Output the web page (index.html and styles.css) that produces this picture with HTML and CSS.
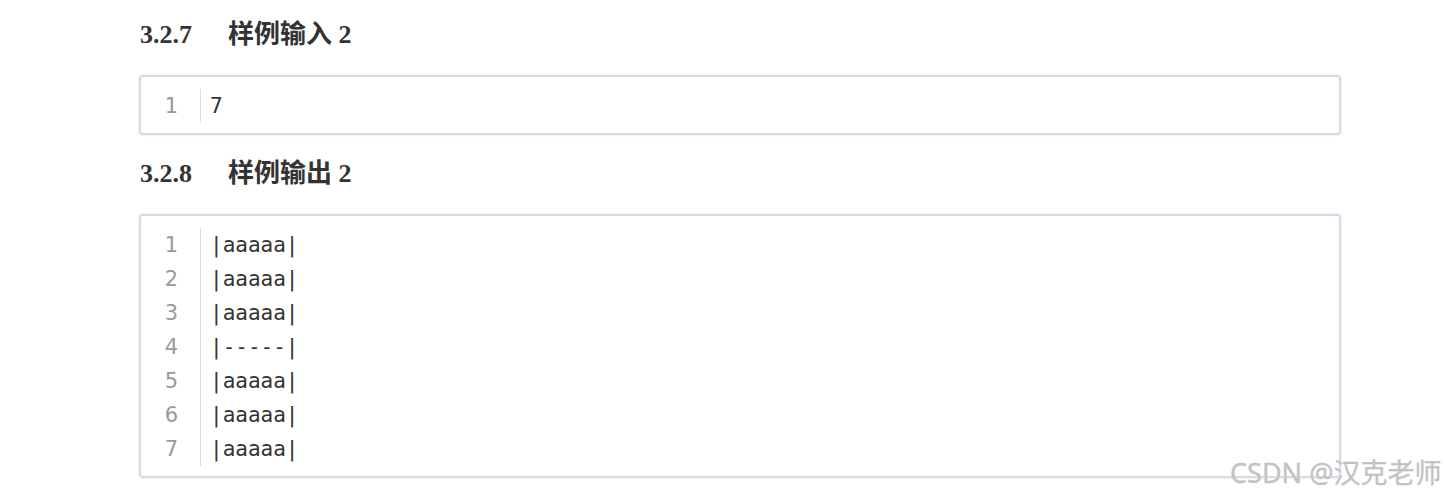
FILE: index.html
```html
<!DOCTYPE html>
<html lang="zh">
<head>
<meta charset="utf-8">
<title>样例</title>
<link rel="stylesheet" href="styles.css">
</head>
<body>
<div class="doc">
  <h3 class="heading"><span class="num">3.2.7</span><span class="title">样例输入 2</span></h3>
  <div class="code">
    <div class="gutter"><div>1</div></div>
    <div class="lines"><div>7</div></div>
  </div>
  <h3 class="heading"><span class="num">3.2.8</span><span class="title">样例输出 2</span></h3>
  <div class="code">
    <div class="gutter"><div>1</div><div>2</div><div>3</div><div>4</div><div>5</div><div>6</div><div>7</div></div>
    <div class="lines"><div>|aaaaa|</div><div>|aaaaa|</div><div>|aaaaa|</div><div>|-----|</div><div>|aaaaa|</div><div>|aaaaa|</div><div>|aaaaa|</div></div>
  </div>
</div>
<div class="watermark">CSDN @汉克老师</div>
</body>
</html>
```
FILE: styles.css
```css
html, body {
  margin: 0;
  padding: 0;
  background: #ffffff;
}
body {
  width: 1445px;
  height: 500px;
  overflow: hidden;
  position: relative;
}
.doc {
  margin-left: 139px;
  width: 1202px;
  padding-top: 20px;
}
.heading {
  margin: 0;
  height: 30px;
  line-height: 30px;
  font-family: "Liberation Serif", "Noto Sans CJK SC", serif;
  font-size: 26px;
  font-weight: bold;
  color: #333333;
  display: flex;
  padding-left: 1px;
}
.heading .num {
  width: 88px;
}
.code {
  margin: 25px 0 24px;
  border: 2px solid #d3dce7;
  border-radius: 4px;
  box-shadow: 0 0 2px rgba(160, 180, 205, 0.5);
  display: flex;
  padding: 12px 0 10px;
  background: #fff;
}
.gutter {
  width: 37px;
  padding-right: 22px;
  border-right: 1px solid #dddddd;
  text-align: right;
  font-family: "DejaVu Sans", "Noto Sans", sans-serif;
  font-size: 21px;
  line-height: 34px;
  color: #999999;
}
.lines {
  padding-left: 9px;
  font-family: "DejaVu Sans Mono", monospace;
  font-size: 21px;
  line-height: 34px;
  color: #333333;
  white-space: pre;
}
.watermark {
  position: absolute;
  left: 1230px;
  top: 456px;
  font-family: "Noto Sans", "Noto Sans CJK SC", sans-serif;
  font-size: 27px;
  line-height: 34px;
  color: #c4c4c4;
  text-shadow: 0 0 1px #ffffff, 0 0 1px #ffffff;
  -webkit-text-stroke: 0.3px #b8b8b8;
}
```
